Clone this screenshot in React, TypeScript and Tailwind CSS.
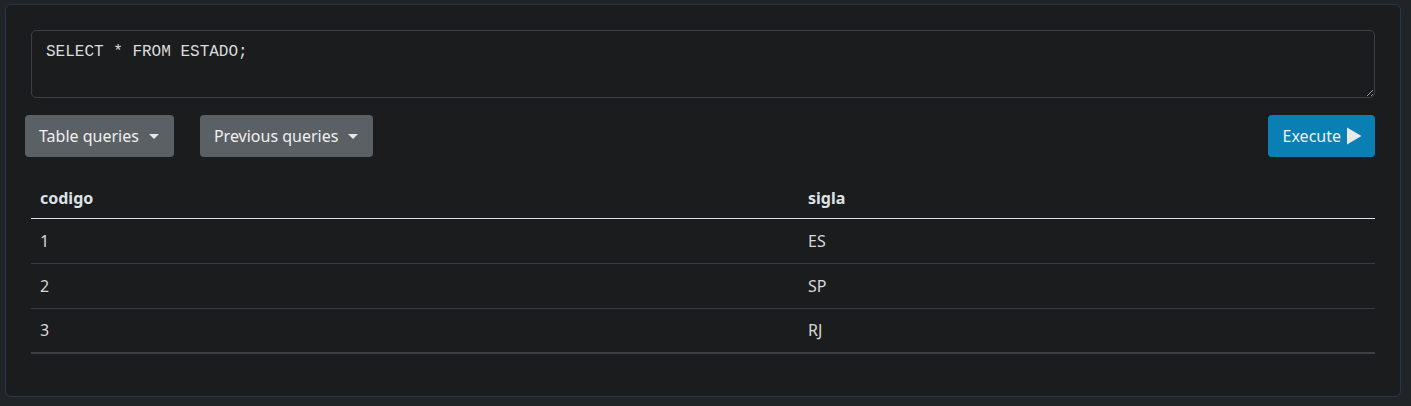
import React from 'react';

const rows = [
  { codigo: 1, sigla: 'ES' },
  { codigo: 2, sigla: 'SP' },
  { codigo: 3, sigla: 'RJ' },
];

const Caret = () => (
  <span className="ml-[10px] inline-block h-0 w-0 border-x-[5px] border-t-[5px] border-x-transparent border-t-[#e8e8e8] align-middle" />
);

const App: React.FC = () => {
  return (
    <div className="min-h-[406px] w-[1411px] bg-[#212427] pt-[4px] pl-[5px] font-['Segoe_UI','Noto_Sans',sans-serif] text-[#dee2e6]">
      <div className="h-[393px] w-[1396px] rounded-[6px] border border-[#24384d] bg-[#1b1c1e] px-[25px] pt-[25px]">
        <textarea
          defaultValue="SELECT * FROM ESTADO;"
          className="block h-[68px] w-full resize-y rounded-[5px] border border-[#3d3f42] bg-[#1b1c1e] px-[14px] py-[10px] font-['Liberation_Mono',monospace] text-[16px] leading-[22px] text-[#dcdcdc] outline-none"
        />

        <div className="mt-[17px] ml-[-6px] flex items-center">
          <button className="flex h-[42px] items-center rounded-[4px] bg-[#5a6064] pr-[15px] pl-[14px] text-[16px] text-[#f0f0f0]">
            Table queries
            <Caret />
          </button>
          <button className="ml-[26px] flex h-[42px] items-center rounded-[4px] bg-[#5a6064] pr-[15px] pl-[14px] text-[16px] text-[#f0f0f0]">
            Previous queries
            <Caret />
          </button>
          <button className="ml-auto flex h-[42px] items-center rounded-[4px] bg-[#0a7fb3] pr-[13px] pl-[15px] text-[16px] text-[#f0f0f0]">
            Execute
            <svg viewBox="0 0 16 20" className="ml-[5px] h-[20px] w-[16px]">
              <path d="M1 1.5 L15.5 10 L1 18.5 Z" fill="#e9e9e9" />
            </svg>
          </button>
        </div>

        <div className="mt-[23px]">
          <table className="w-full border-collapse text-left text-[16px]">
            <thead>
              <tr className="border-b border-[#dee2e6]">
                <th className="h-[38px] w-[768px] px-[9px] pb-[2px] font-bold">codigo</th>
                <th className="h-[38px] px-[9px] pb-[2px] font-bold">sigla</th>
              </tr>
            </thead>
            <tbody>
              {rows.map((r, i) => (
                <tr
                  key={r.codigo}
                  className={i === rows.length - 1 ? 'border-b-2 border-[#3c3f42]' : 'border-b border-[#3a3c3f]'}
                >
                  <td className="h-[45px] px-[9px] text-[#d8d8d8]">{r.codigo}</td>
                  <td className="h-[45px] px-[9px] text-[#d8d8d8]">{r.sigla}</td>
                </tr>
              ))}
            </tbody>
          </table>
        </div>
      </div>
    </div>
  );
};

export default App;
